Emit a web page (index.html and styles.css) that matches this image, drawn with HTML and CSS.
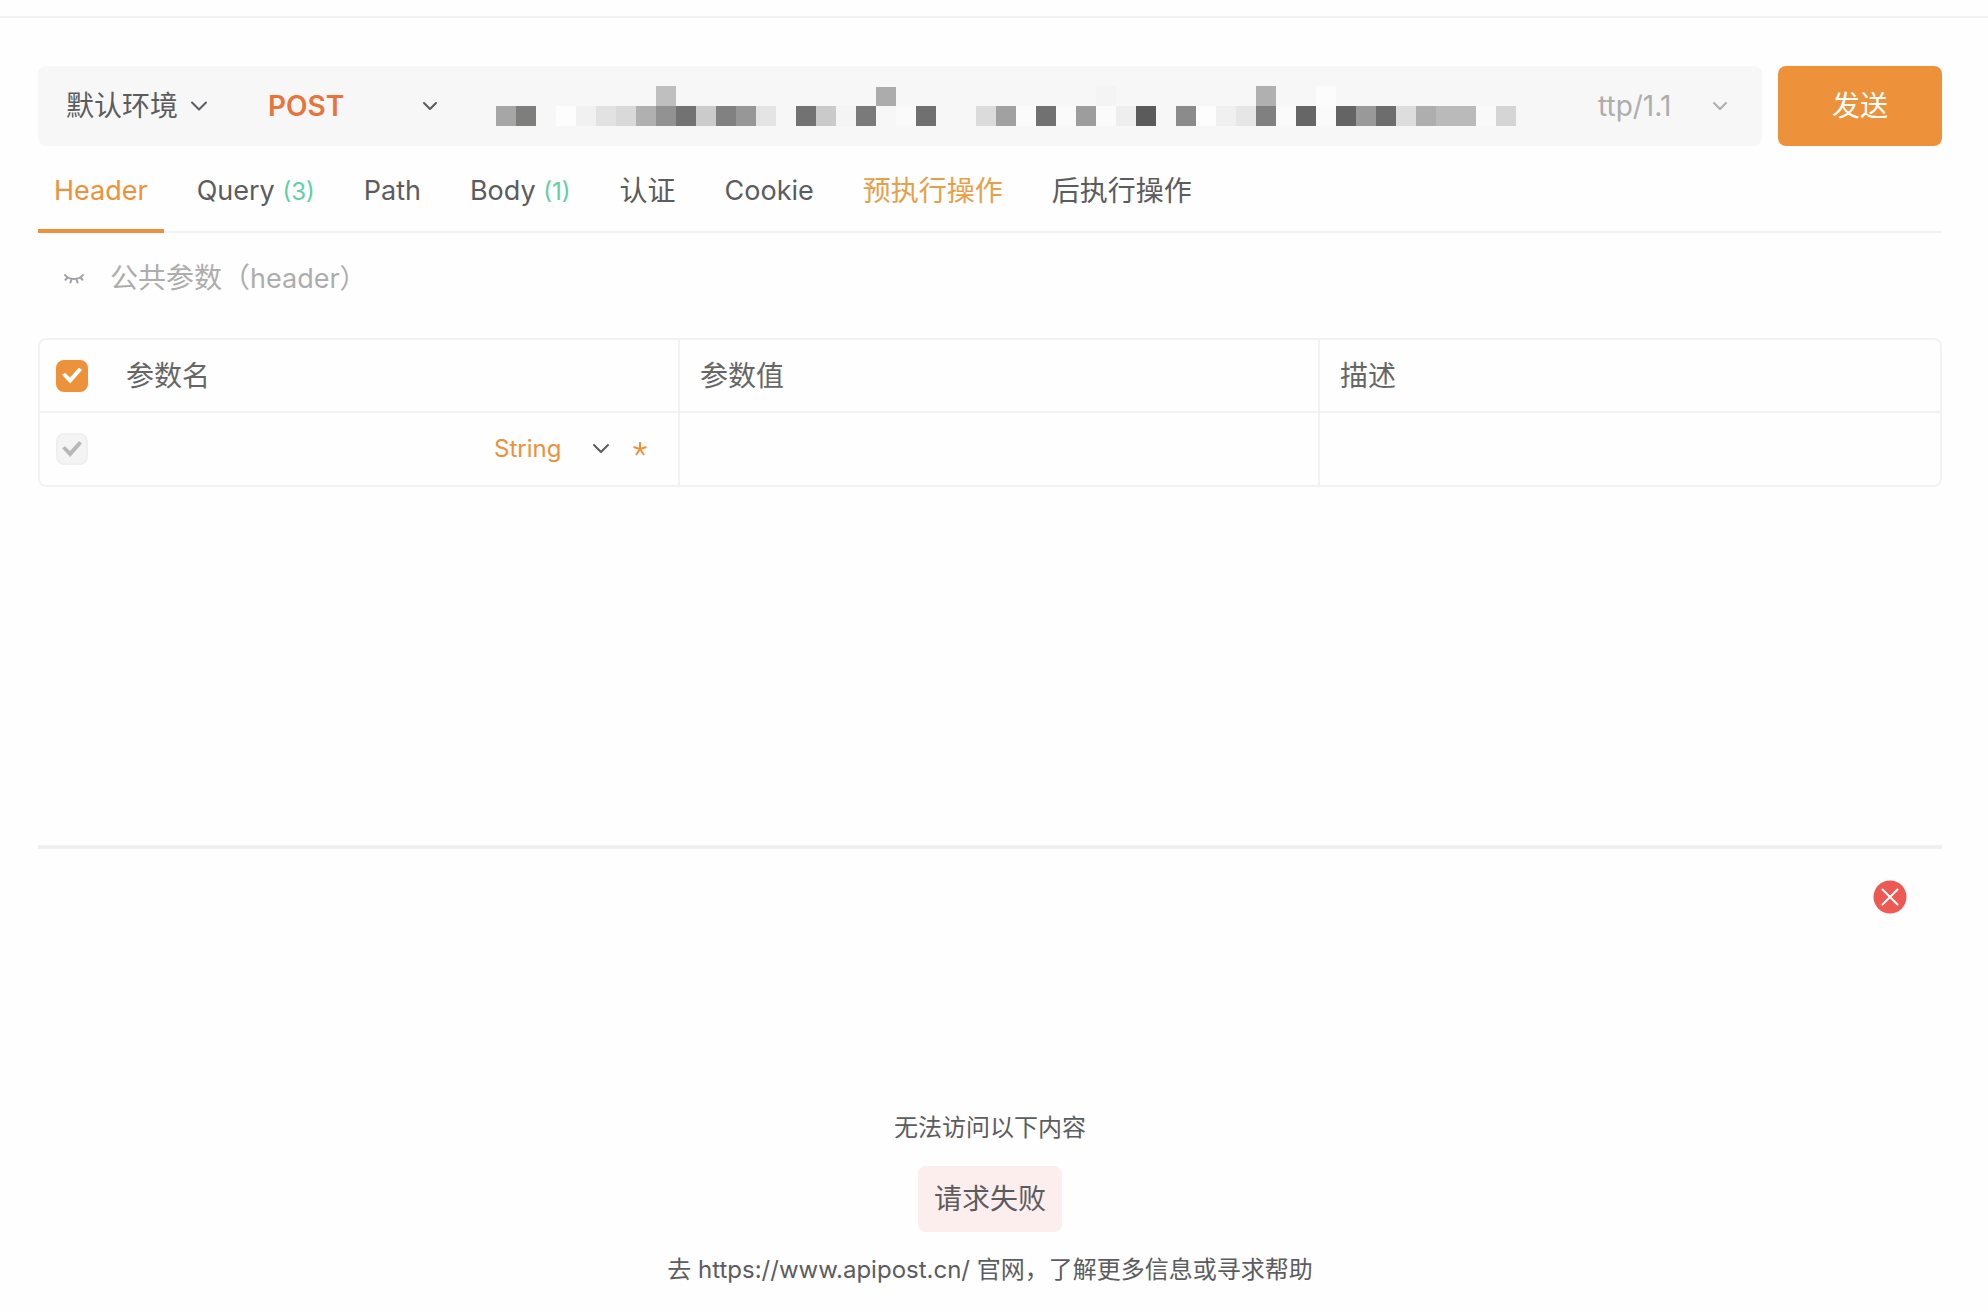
FILE: index.html
```html
<!DOCTYPE html>
<html lang="zh-CN">
<head>
<meta charset="utf-8">
<meta name="viewport" content="width=device-width, initial-scale=1">
<title>接口调试</title>
<link rel="stylesheet" href="styles.css">
</head>
<body>
<main class="page">
  <form class="request-bar">
    <div class="address">
      <div class="picker picker-env">
        <select aria-label="环境"><option>默认环境</option></select>
        <svg class="chevron" viewBox="0 0 18 10" width="18" height="10"><path d="M2 1.5l7 7 7-7"/></svg>
      </div>
      <div class="picker picker-method">
        <select aria-label="请求方法"><option>POST</option></select>
        <svg class="chevron" viewBox="0 0 16 10" width="16" height="10"><path d="M2 2l6 6 6-6"/></svg>
      </div>
      <div class="url">
        <svg viewBox="0 0 1020 40" width="1020" height="40" shape-rendering="crispEdges" role="img" aria-label="URL">
          <g>
            <path fill="#bfbfbf" d="M160 0h20v20h-20z"/><path fill="#acacac" d="M380 1h20v19h-20z"/><path fill="#f4f4f4" d="M600 0h20v20h-20z"/><path fill="#b0b0b0" d="M760 0h20v20h-20z"/><path fill="#fcfcfc" d="M820 0h20v20h-20z"/>
          </g>
          <g>
            <path fill="#a6a6a6" d="M0 20h20v20H0z"/><path fill="#7e7e7c" d="M20 20h20v20H20z"/><path fill="#fdfdfd" d="M60 20h20v20H60z"/><path fill="#f1f1f1" d="M80 20h20v20H80z"/><path fill="#e2e2e2" d="M100 20h20v20h-20z"/><path fill="#d9d9d9" d="M120 20h20v20h-20z"/><path fill="#b0b0b0" d="M140 20h20v20h-20z"/><path fill="#929292" d="M160 20h20v20h-20z"/><path fill="#727272" d="M180 20h20v20h-20z"/><path fill="#cbcbcb" d="M200 20h20v20h-20z"/><path fill="#818181" d="M220 20h20v20h-20z"/><path fill="#979797" d="M240 20h20v20h-20z"/><path fill="#e4e4e4" d="M260 20h20v20h-20z"/>
            <path fill="#727272" d="M300 20h20v20h-20z"/><path fill="#cacaca" d="M320 20h20v20h-20z"/><path fill="#f4f4f4" d="M340 20h20v20h-20z"/><path fill="#7a7a7a" d="M360 20h20v20h-20z"/><path fill="#fafafa" d="M400 20h20v20h-20z"/><path fill="#707070" d="M420 20h20v20h-20z"/><path fill="#dbdbdb" d="M480 20h20v20h-20z"/><path fill="#a1a1a1" d="M500 20h20v20h-20z"/><path fill="#fbfbfb" d="M520 20h20v20h-20z"/><path fill="#717171" d="M540 20h20v20h-20z"/><path fill="#fafafa" d="M560 20h20v20h-20z"/><path fill="#9d9d9d" d="M580 20h20v20h-20z"/><path fill="#fbfbfb" d="M600 20h20v20h-20z"/><path fill="#eee" d="M620 20h20v20h-20z"/><path fill="#5b5b5b" d="M640 20h20v20h-20z"/>
            <path fill="#8b8b8b" d="M680 20h20v20h-20z"/><path fill="#fdfdfd" d="M700 20h20v20h-20z"/><path fill="#f0f0f0" d="M720 20h20v20h-20z"/><path fill="#e6e6e6" d="M740 20h20v20h-20z"/><path fill="#808080" d="M760 20h20v20h-20z"/><path fill="#fafafa" d="M780 20h20v20h-20z"/><path fill="#666" d="M800 20h20v20h-20z"/><path fill="#fafafa" d="M820 20h20v20h-20z"/><path fill="#646464" d="M840 20h20v20h-20z"/><path fill="#999" d="M860 20h20v20h-20z"/><path fill="#6d6d6d" d="M880 20h20v20h-20z"/><path fill="#ddd" d="M900 20h20v20h-20z"/><path fill="#aeaeae" d="M920 20h20v20h-20z"/><path fill="#bababa" d="M940 20h40v20h-40z"/><path fill="#f9f9f9" d="M980 20h20v20h-20z"/><path fill="#d5d5d5" d="M1000 20h20v20h-20z"/>
          </g>
        </svg>
      </div>
      <div class="picker picker-protocol">
        <select aria-label="协议"><option>ttp/1.1</option></select>
        <svg class="chevron" viewBox="0 0 16 10" width="16" height="10"><path d="M2 2l6 6 6-6"/></svg>
      </div>
    </div>
    <button class="send" type="button">发送</button>
  </form>

  <nav class="tabs">
    <a class="tab tab-active" href="#header">Header</a>
    <a class="tab" href="#query">Query <span class="count">(3)</span></a>
    <a class="tab" href="#path">Path</a>
    <a class="tab" href="#body">Body <span class="count">(1)</span></a>
    <a class="tab tab-cjk" href="#auth">认证</a>
    <a class="tab" href="#cookie">Cookie</a>
    <a class="tab tab-cjk tab-marked" href="#pre">预执行操作</a>
    <a class="tab tab-cjk" href="#post">后执行操作</a>
  </nav>

  <section class="params" id="header">
    <button class="common" type="button">
      <svg class="eye" viewBox="0 0 20 12" width="20" height="12"><path d="M1 2c4 5.300 14 5.300 18 0M3.800 4.500L1.500 6.800M7.500 6L6.500 9.500M12.500 6l1 3.500M16.200 4.500l2.300 2.300"/></svg>
      <span>公共参数（<span class="latin">header）</span></span>
    </button>

    <table class="param-table">
      <thead>
        <tr>
          <th scope="col"><div class="cell"><input class="tick" type="checkbox" checked aria-label="全选"><span>参数名</span></div></th>
          <th scope="col">参数值</th>
          <th scope="col">描述</th>
        </tr>
      </thead>
      <tbody>
        <tr>
          <td>
            <div class="cell">
              <input class="tick" type="checkbox" checked disabled aria-label="启用参数">
              <div class="picker picker-type">
                <select aria-label="参数类型"><option>String</option></select>
                <svg class="chevron" viewBox="0 0 18 12" width="18" height="12"><path d="M2 2l7 7 7-7"/></svg>
              </div>
              <svg class="required" viewBox="0 0 16 16" width="16" height="16" role="img" aria-label="必填"><path d="M8 8V1M8 8L1.500 6M8 8l6.500-2M8 8l-4 6M8 8l4 6"/></svg>
            </div>
          </td>
          <td></td>
          <td></td>
        </tr>
      </tbody>
    </table>
  </section>

  <section class="response">
    <button class="close" type="button" aria-label="关闭">
      <svg viewBox="0 0 34 34" width="34" height="34"><circle cx="17" cy="17" r="16.500" fill="#ed5a54"/><path d="M9.500 9.500l15 15M24.500 9.500l-15 15" fill="none" stroke="#fff" stroke-width="2" stroke-linecap="round"/></svg>
    </button>
    <div class="failure">
      <p>无法访问以下内容</p>
      <strong class="reason">请求失败</strong>
      <p>去 <a class="site" href="https://www.apipost.cn/">https://www.apipost.cn/</a> 官网，了解更多信息或寻求帮助</p>
    </div>
  </section>
</main>
</body>
</html>
```
FILE: styles.css
```css
* { box-sizing: border-box; }

body {
  margin: 0;
  padding-top: 16px;
  background: #fefefe;
  color: #5b5c60;
  font: 28px/40px Inter, "Noto Sans CJK SC", sans-serif;
}

a { color: inherit; text-decoration: none; }
p { margin: 0; }

button {
  margin: 0;
  padding: 0;
  border: 0;
  background: none;
  color: inherit;
  font: inherit;
}

svg { display: block; flex: none; }

.page {
  padding: 48px 46px 0 38px;
  border-top: 2px solid #f2f2f2;
}

.request-bar { display: flex; gap: 16px; }

.address {
  flex: 1;
  display: flex;
  min-width: 0;
  border-radius: 8px;
  background: #f7f7f7;
}

.picker { display: flex; align-items: center; }

.picker select {
  flex: 1;
  min-width: 0;
  height: 40px;
  padding: 0;
  border: 0;
  appearance: none;
  background: none;
  color: inherit;
  font: inherit;
}

.chevron {
  fill: none;
  stroke: currentColor;
  stroke-width: 2;
  stroke-linecap: round;
  stroke-linejoin: round;
  pointer-events: none;
}

.picker-env { width: 170px; padding-left: 28px; }
.picker-method { width: 170px; margin-left: 60px; }
.picker-method select { color: #e8743b; font-weight: 600; }
.picker-protocol { width: 164px; padding-right: 34px; color: #adadad; }
.picker-type { width: 116px; margin-left: auto; font-size: 24px; }
.picker-type select { color: #ed913a; }

.url {
  flex: 1;
  min-width: 0;
  padding: 20px 0 20px 58px;
  overflow: hidden;
}

.send {
  width: 164px;
  height: 80px;
  border-radius: 8px;
  background: #ed913a;
  color: #fff;
}

.tabs {
  display: flex;
  gap: 17px;
  height: 87px;
  border-bottom: 2px solid #f2f2f2;
}

.tab {
  height: 87px;
  padding: 25px 16px 0;
  white-space: nowrap;
  font-size: 27px;
}
.tab-cjk { font-size: 28px; }
.tab-active { border-bottom: 4px solid #ed913a; color: #ed913a; }
.tab-marked { color: #e6a04a; }
.count { color: #5fcfa5; font-size: 24px; }

.params { min-height: 612px; padding-top: 25px; }

.common {
  display: flex;
  align-items: center;
  gap: 26px;
  margin: 0 0 39px 26px;
  color: #adadad;
}
.latin { font-size: 27px; }

.eye {
  fill: none;
  stroke: #a0a1a6;
  stroke-width: 2;
  stroke-linecap: round;
}

.param-table {
  width: 100%;
  border: 2px solid #f2f2f2;
  border-radius: 8px;
  border-spacing: 0;
  table-layout: fixed;
}

.param-table th,
.param-table td {
  height: 72px;
  padding: 0 20px;
  text-align: left;
  font-weight: 400;
}
.param-table th {
  height: 73px;
  border-bottom: 2px solid #f2f2f2;
  color: #666;
}
.param-table th:first-child,
.param-table td:first-child { padding: 0 30px 0 16px; }
.param-table th:not(:last-child) { width: 640px; }
.param-table th:not(:last-child),
.param-table td:not(:last-child) { border-right: 2px solid #f2f2f2; }

.cell { display: flex; align-items: center; }
.cell > span { margin-left: 38px; }

.tick {
  width: 32px;
  height: 32px;
  margin: 0;
  border-radius: 8px;
  appearance: none;
  background: #ed913a;
  display: grid;
  place-items: center;
}
.tick::before {
  content: "";
  width: 20px;
  height: 16px;
  background: #fff;
  clip-path: polygon(0 45%, 15% 33%, 40% 62%, 85% 0, 100% 16%, 41% 100%);
}
.tick:disabled { border: 2px solid #efefef; background: #f4f4f4; }
.tick:disabled::before { background: #b8b8b8; }

.required {
  margin-left: 22px;
  fill: none;
  stroke: #ed913a;
  stroke-width: 2;
}

.response {
  display: flex;
  flex-direction: column;
  padding: 31px 35px 22px;
  border-top: 4px solid #f0f0f2;
}

.close { align-self: flex-end; }

.failure {
  display: flex;
  flex-direction: column;
  align-items: center;
  gap: 18px;
  padding-top: 194px;
  font-size: 24px;
}

.reason {
  padding: 13px 16px;
  border-radius: 8px;
  background: #fdeeee;
  font-size: 28px;
  font-weight: 400;
}
```
